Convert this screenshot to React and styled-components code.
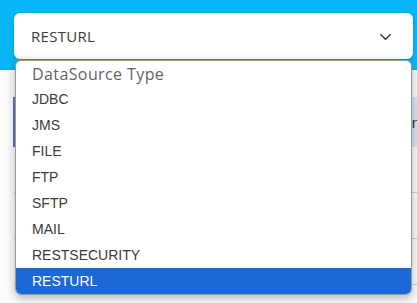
import React from 'react'
import styled, { createGlobalStyle } from 'styled-components'

const options = ['JDBC', 'JMS', 'FILE', 'FTP', 'SFTP', 'MAIL', 'RESTSECURITY', 'RESTURL']

export default function App() {
  const selected = 'RESTURL'
  return (
    <Page>
      <GlobalStyle />
      <Header>
        <SelectWrap>
          <SelectBox>
            <SelectValue>{selected}</SelectValue>
            <Chevron viewBox="0 0 16 16">
              <path d="M2.5 5.5 L8 11 L13.5 5.5" />
            </Chevron>
          </SelectBox>
          <List>
            <Placeholder>DataSource Type</Placeholder>
            {options.map(o => (
              <Option key={o} active={o === selected}>{o}</Option>
            ))}
          </List>
        </SelectWrap>
      </Header>
      <Body>
        <TabRow>
          <TabLabel>n</TabLabel>
        </TabRow>
        <Row />
        <Row />
        <Row />
      </Body>
    </Page>
  )
}

const GlobalStyle = createGlobalStyle`
  html, body {
    margin: 0;
    padding: 0;
    background: #efefef;
  }
  body {
    font-family: "Liberation Sans", Arial, sans-serif;
  }
`

const Page = styled.div`
  width: 417px;
  height: 303px;
  overflow: hidden;
  background: #f4f4f4;
`

const Header = styled.div`
  background: #08b5f7;
  height: 70px;
  padding: 13px 4px 0 14px;
  box-sizing: border-box;
  position: relative;
  z-index: 2;
`

const SelectWrap = styled.div`
  position: relative;
`

const SelectBox = styled.div`
  height: 46px;
  background: #fff;
  border-radius: 6px;
  display: flex;
  align-items: center;
  justify-content: space-between;
  padding: 0 20px 0 17px;
  box-shadow: 0 1px 3px rgba(0, 0, 0, 0.25);
`

const SelectValue = styled.span`
  font-family: "Open Sans", "Noto Sans", sans-serif;
  font-size: 15px;
  letter-spacing: 0.3px;
  color: #3a3a3a;
`

const Chevron = styled.svg`
  width: 15px;
  height: 15px;
  fill: none;
  stroke: #333;
  stroke-width: 1.5;
`

const List = styled.div`
  position: absolute;
  top: 47px;
  left: 1px;
  right: 1px;
  background: #fff;
  border: 1px solid #9a9a9a;
  border-radius: 6px;
  overflow: hidden;
  box-shadow: 0 3px 10px rgba(0, 0, 0, 0.28);
`

const Placeholder = styled.div`
  height: 25px;
  display: flex;
  align-items: center;
  padding-left: 16px;
  font-family: "Open Sans", "Noto Sans", sans-serif;
  font-size: 16px;
  letter-spacing: 0.4px;
  color: #646464;
`

const Option = styled.div`
  height: 26px;
  display: flex;
  align-items: center;
  padding-left: 16px;
  font-size: 14px;
  color: ${p => (p.active ? '#fff' : '#3b3b3b')};
  background: ${p => (p.active ? '#1b69d6' : '#fff')};
`

const Body = styled.div`
  background: #fbfbfb;
  padding-top: 27px;
  height: 233px;
`

const TabRow = styled.div`
  height: 50px;
  background: #d9e3f2;
  border-left: 2px solid #6b72c6;
  margin-left: 13px;
  display: flex;
  align-items: center;
  justify-content: flex-end;
`

const TabLabel = styled.span`
  font-size: 15px;
  color: #333;
  margin-right: -3px;
`

const Row = styled.div`
  height: 45px;
  border-bottom: 1px solid #cfcfcf;
  margin-left: 14px;
`
